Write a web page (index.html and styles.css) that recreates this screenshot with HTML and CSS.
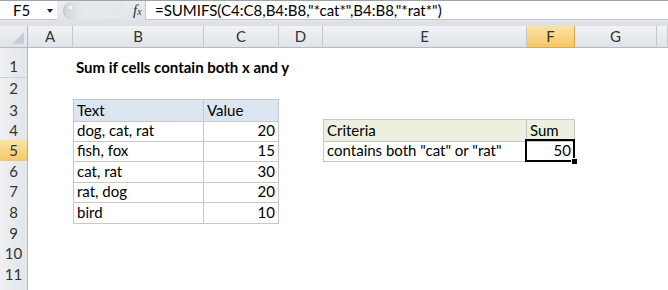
FILE: index.html
```html
<!DOCTYPE html>
<html>
<head>
<meta charset="utf-8">
<link rel="stylesheet" href="styles.css">
</head>
<body>
<div class="app">
  <div class="fbar">
    <div class="namebox"><span class="nb-text">F5</span><span class="arrow"></span></div>
    <div class="mid"><div class="grip"><span class="dot"></span></div><span class="fx"><i>f</i><span class="x">x</span></span></div>
    <div class="formula">=SUMIFS(C4:C8,B4:B8,"*cat*",B4:B8,"*rat*")</div>
  </div>

  <div class="sheet">
    <div class="row hdr">
      <div class="corner"><span class="tri"></span></div>
      <div class="ch">A</div><div class="ch">B</div><div class="ch">C</div><div class="ch">D</div><div class="ch">E</div><div class="ch sel">F</div><div class="ch">G</div><div class="ch"></div>
    </div>
    <div class="row r1">
      <div class="rh">1</div><div class="c"></div><div class="c title">Sum if cells contain both x and y</div><div class="c"></div><div class="c"></div><div class="c"></div><div class="c"></div><div class="c"></div><div class="c"></div>
    </div>
    <div class="row">
      <div class="rh">2</div><div class="c"></div><div class="c"></div><div class="c"></div><div class="c"></div><div class="c"></div><div class="c"></div><div class="c"></div><div class="c"></div>
    </div>
    <div class="row">
      <div class="rh">3</div><div class="c"></div><div class="c tb tl th top">Text</div><div class="c tb th top">Value</div><div class="c"></div><div class="c"></div><div class="c"></div><div class="c"></div><div class="c"></div>
    </div>
    <div class="row">
      <div class="rh">4</div><div class="c"></div><div class="c tb tl">dog, cat, rat</div><div class="c tb num">20</div><div class="c"></div><div class="c cb cl top ch2">Criteria</div><div class="c cb top ch2">Sum</div><div class="c"></div><div class="c"></div>
    </div>
    <div class="row">
      <div class="rh sel">5</div><div class="c"></div><div class="c tb tl">fish, fox</div><div class="c tb num">15</div><div class="c"></div><div class="c cb cl">contains both "cat" or "rat"</div><div class="c cb num active">50<span class="handle"></span></div><div class="c"></div><div class="c"></div>
    </div>
    <div class="row">
      <div class="rh">6</div><div class="c"></div><div class="c tb tl">cat, rat</div><div class="c tb num">30</div><div class="c"></div><div class="c"></div><div class="c"></div><div class="c"></div><div class="c"></div>
    </div>
    <div class="row">
      <div class="rh">7</div><div class="c"></div><div class="c tb tl">rat, dog</div><div class="c tb num">20</div><div class="c"></div><div class="c"></div><div class="c"></div><div class="c"></div><div class="c"></div>
    </div>
    <div class="row">
      <div class="rh">8</div><div class="c"></div><div class="c tb tl">bird</div><div class="c tb num">10</div><div class="c"></div><div class="c"></div><div class="c"></div><div class="c"></div><div class="c"></div>
    </div>
    <div class="row">
      <div class="rh">9</div><div class="c"></div><div class="c"></div><div class="c"></div><div class="c"></div><div class="c"></div><div class="c"></div><div class="c"></div><div class="c"></div>
    </div>
    <div class="row">
      <div class="rh">10</div><div class="c"></div><div class="c"></div><div class="c"></div><div class="c"></div><div class="c"></div><div class="c"></div><div class="c"></div><div class="c"></div>
    </div>
    <div class="row">
      <div class="rh">11</div><div class="c"></div><div class="c"></div><div class="c"></div><div class="c"></div><div class="c"></div><div class="c"></div><div class="c"></div><div class="c"></div>
    </div>
    <div class="row">
      <div class="rh"></div><div class="c"></div><div class="c"></div><div class="c"></div><div class="c"></div><div class="c"></div><div class="c"></div><div class="c"></div><div class="c"></div>
    </div>
  </div>
</div>
</body>
</html>
```

FILE: styles.css
```css
html, body {
  margin: 0;
  padding: 0;
  background: #ffffff;
}
.app {
  width: 668px;
  height: 290px;
  overflow: hidden;
  font-family: Lato, "Liberation Sans", sans-serif;
  font-size: 15px;
  color: #000;
}

/* formula bar */
.fbar {
  height: 26px;
  box-sizing: border-box;
  display: flex;
  align-items: flex-start;
  background: linear-gradient(#e9ecf0, #dde1e6);
  border-top: 1px solid #9ea3aa;
}
.namebox {
  width: 57px;
  height: 19px;
  background: #fff;
  display: flex;
  align-items: center;
  box-sizing: border-box;
  border-bottom: 1px solid #c3c8ce;
}
.nb-text {
  margin-left: 13px;
  width: 30px;
}
.arrow {
  width: 0;
  height: 0;
  border-left: 3.5px solid transparent;
  border-right: 3.5px solid transparent;
  border-top: 4px solid #222;
  margin-left: 4px;
  margin-top: 1px;
}
.mid {
  width: 88px;
  height: 19px;
  display: flex;
  align-items: center;
  position: relative;
}
.grip {
  width: 60px;
  height: 17px;
  margin-left: 6px;
  border-radius: 9px 0 0 9px;
  background: linear-gradient(90deg, #d2d6db, #e6e9ed 30%, #e4e7eb);
  border-left: 1px solid #b8bdc4;
  display: flex;
  align-items: center;
}
.dot {
  width: 3px;
  height: 3px;
  border-radius: 50%;
  background: #fff;
  margin-left: 5px;
  margin-top: -6px;
}
.fx {
  font-family: "Liberation Serif", serif;
  font-size: 15px;
  margin-left: 9px;
  color: #333;
  display: flex;
  align-items: baseline;
}
.fx .x {
  font-style: italic;
  font-size: 10px;
}
.formula {
  flex: 1;
  height: 19px;
  background: #fff;
  box-sizing: border-box;
  border-bottom: 1px solid #c3c8ce;
  border-left: 1px solid #c3c8ce;
  padding-left: 9px;
  line-height: 19px;
  white-space: nowrap;
}

/* grid */
.row {
  display: grid;
  grid-template-columns: 28px 45px 131px 75px 44px 204px 48px 82px 11px;
  height: 20.67px;
}
.row.hdr { height: 20px; }
.row.r1 { height: 32px; }
.row > div {
  box-sizing: border-box;
  display: flex;
  align-items: flex-end;
  white-space: nowrap;
  overflow: visible;
  line-height: 20px;
  padding-bottom: 1px;
}

.corner {
  background: linear-gradient(#eef0f3, #dfe3e8);
  border-right: 1px solid #b5bac1;
  border-bottom: 1px solid #b5bac1;
  position: relative;
}
.tri {
  position: absolute;
  right: 3px;
  bottom: 3px;
  width: 0;
  height: 0;
  border-left: 12px solid transparent;
  border-bottom: 12px solid #c9cdd3;
}
.ch {
  background: linear-gradient(#f1f3f5, #dfe3e8);
  border-right: 1px solid #c3c8ce;
  border-bottom: 1px solid #b5bac1;
  justify-content: center;
  align-items: center !important;
  color: #333;
}
.ch.sel, .rh.sel {
  background: linear-gradient(#fbe3a6, #f3c867);
  border-right-color: #e1a84a;
  border-bottom-color: #e1a84a;
}
.rh {
  background: linear-gradient(90deg, #eef0f3, #e2e5e9);
  border-right: 1px solid #b5bac1;
  border-bottom: 1px solid #cdd1d6;
  justify-content: center;
  color: #333;
}
.c {
  padding: 0 3px;
  position: relative;
}
.title {
  font-weight: bold;
}

/* data table */
.tb {
  border-right: 1px solid #c8c8c8;
  border-bottom: 1px solid #c8c8c8;
}
.tb.tl { border-left: 1px solid #c8c8c8; }
.tb.top, .cb.top { border-top: 1px solid #c8c8c8; }
.th { background: #dce6f1; }

.cb {
  border-right: 1px solid #c8c8c8;
  border-bottom: 1px solid #c8c8c8;
}
.cb.cl { border-left: 1px solid #c8c8c8; }
.ch2 { background: #ebf1de; }

.num { justify-content: flex-end; }

.active::after {
  content: "";
  position: absolute;
  left: -2px;
  top: -1px;
  right: -1px;
  bottom: -1px;
  border: 2px solid #000;
}
.handle {
  position: absolute;
  right: -4px;
  bottom: -4px;
  width: 5px;
  height: 5px;
  background: #000;
  border: 1px solid #fff;
  z-index: 2;
}
```
